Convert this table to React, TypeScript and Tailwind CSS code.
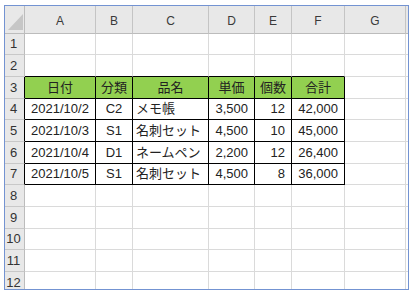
const columns = ["A", "B", "C", "D", "E", "F", "G"];

type Align = "center" | "left" | "right";

const rows: { cells: string[]; header?: boolean }[] = [
  { cells: [] },
  { cells: [] },
  { cells: ["日付", "分類", "品名", "単価", "個数", "合計"], header: true },
  { cells: ["2021/10/2", "C2", "メモ帳", "3,500", "12", "42,000"] },
  { cells: ["2021/10/3", "S1", "名刺セット", "4,500", "10", "45,000"] },
  { cells: ["2021/10/4", "D1", "ネームペン", "2,200", "12", "26,400"] },
  { cells: ["2021/10/5", "S1", "名刺セット", "4,500", "8", "36,000"] },
  { cells: [] },
  { cells: [] },
  { cells: [] },
  { cells: [] },
  { cells: [] },
];

const dataAlign: Align[] = ["center", "center", "left", "right", "right", "right"];

const alignClass: Record<Align, string> = {
  center: "justify-center",
  left: "justify-start pl-[3px]",
  right: "justify-end pr-[6px]",
};

// table occupies rows 3..7 (index 2..6) and columns A..F (index 0..5)
const inTable = (r: number, c: number) => r >= 2 && r <= 6 && c <= 5;

export default function App() {
  return (
    <div className="w-[413px] h-[293px] bg-white pt-[5px] pl-[4px]">
      <div
        className="w-[405px] h-[285px] border border-[#7393d2] overflow-hidden text-[13px] text-[#222]"
        style={{ fontFamily: '"Liberation Sans", "Noto Sans CJK JP", sans-serif' }}
      >
        <div className="grid grid-cols-[20px_71px_37px_76px_46px_37px_53px_61px_2px] grid-rows-[28px_21px_22px_22px_21px_22px_22px_21px_22px_22px_21px_22px_22px]">
          {/* corner */}
          <div className="bg-[#e8e8e8] border-r border-b border-[#bcbcbc] relative">
            <svg className="absolute left-0 top-0" width="19" height="27" viewBox="0 0 19 27">
              <polygon points="3,24 18,24 18,8" fill="#c6c6c6" />
            </svg>
          </div>
          {columns.map((col) => (
            <div
              key={col}
              className="bg-[#e8e8e8] border-r border-b border-[#c4c4c4] border-b-[#bcbcbc] flex justify-center pt-[6px] text-[12px] text-[#3a3a3a]"
            >
              {col}
            </div>
          ))}
          <div className="bg-[#e8e8e8] border-b border-[#bcbcbc]" />

          {rows.map((row, r) => (
            <Row key={r} index={r} cells={row.cells} header={row.header} />
          ))}
        </div>
      </div>
    </div>
  );
}

function Row({ index, cells, header }: { index: number; cells: string[]; header?: boolean }) {
  const leftBlack = index >= 2 && index <= 6;
  return (
    <>
      <div
        className={
          "bg-[#e8e8e8] border-b border-[#c8c8c8] border-r flex items-center justify-center pr-[2px] text-[#333] " +
          (leftBlack ? "border-r-black" : "border-r-[#bcbcbc]")
        }
      >
        {index + 1}
      </div>
      {columns.map((_, c) => {
        const table = inTable(index, c);
        const topOfTable = index === 1 && c <= 5;
        const text = cells[c] ?? "";
        const align: Align = header ? "center" : dataAlign[c] ?? "left";
        return (
          <div
            key={c}
            className={
              "flex items-center whitespace-nowrap border-r border-b " +
              alignClass[align] +
              " " +
              (table ? "border-black" : "border-[#dadada]") +
              (topOfTable ? " border-b-black" : "") +
              (header && table ? " bg-[#92d050]" : "")
            }
          >
            {text}
          </div>
        );
      })}
      <div className="border-b border-[#dadada] bg-white" />
    </>
  );
}
